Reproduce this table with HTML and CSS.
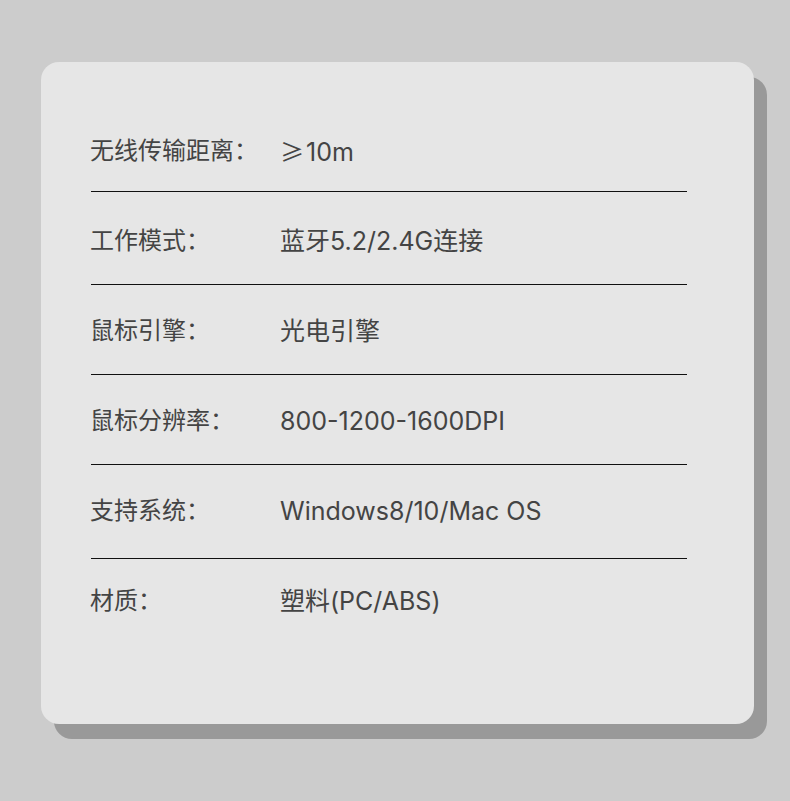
FILE: index.html
```html
<!DOCTYPE html>
<html lang="zh-CN">
<head>
    <meta charset="UTF-8">
    <meta name="viewport" content="width=device-width, initial-scale=1.0">
    <title>产品参数</title>
    <link rel="stylesheet" href="styles.css">
</head>
<body>
    <div class="spec-card">
        <div class="spec-row">
            <span class="spec-label">无线传输距离：</span>
            <span class="spec-value"><span class="spec-sym">≥</span>10m</span>
        </div>
        <div class="spec-row">
            <span class="spec-label">工作模式：</span>
            <span class="spec-value">蓝牙5.2/2.4G连接</span>
        </div>
        <div class="spec-row">
            <span class="spec-label">鼠标引擎：</span>
            <span class="spec-value">光电引擎</span>
        </div>
        <div class="spec-row">
            <span class="spec-label">鼠标分辨率：</span>
            <span class="spec-value">800-1200-1600DPI</span>
        </div>
        <div class="spec-row">
            <span class="spec-label">支持系统：</span>
            <span class="spec-value">Windows8/10/Mac OS</span>
        </div>
        <div class="spec-row">
            <span class="spec-label">材质：</span>
            <span class="spec-value">塑料(PC/ABS)</span>
        </div>
    </div>
</body>
</html>
```

FILE: styles.css
```css
html, body {
    margin: 0;
    min-height: 100vh;
}

body {
    background: #cccccc;
    font-family: "Inter", "Noto Sans CJK SC", sans-serif;
    color: #444444;
    padding: 62px 0 40px 41px;
    box-sizing: border-box;
}

.spec-card {
    position: relative;
    width: 713px;
    height: 662px;
    box-sizing: border-box;
    padding: 43px 67px 0 50px;
    background: #e6e6e6;
    border-radius: 18px;
}

/* offset backing plate behind the card */
.spec-card::before {
    content: "";
    position: absolute;
    top: 15px;
    left: 13px;
    right: -13px;
    bottom: -15px;
    background: #999999;
    border-radius: 18px;
    z-index: -1;
}

.spec-row {
    display: flex;
    align-items: center;
    height: 30px;
    padding: 31px 0 28px;
    border-bottom: 1px solid #111111;
    font-size: 24px;
    line-height: 30px;
}

.spec-row:first-child {
    padding-bottom: 25px;
}

.spec-row:nth-child(2) {
    padding-top: 34px;
}

.spec-row:nth-child(5) {
    padding-bottom: 32px;
}

.spec-row:last-child {
    padding-top: 27px;
    border-bottom: none;
}

.spec-label {
    width: 190px;
    margin-left: -1px;
    flex-shrink: 0;
}

.spec-value {
    font-size: 25px;
    white-space: nowrap;
}

.spec-sym {
    font-family: "Noto Sans CJK SC", sans-serif;
    font-size: 24px;
    margin-right: 2px;
}
```
